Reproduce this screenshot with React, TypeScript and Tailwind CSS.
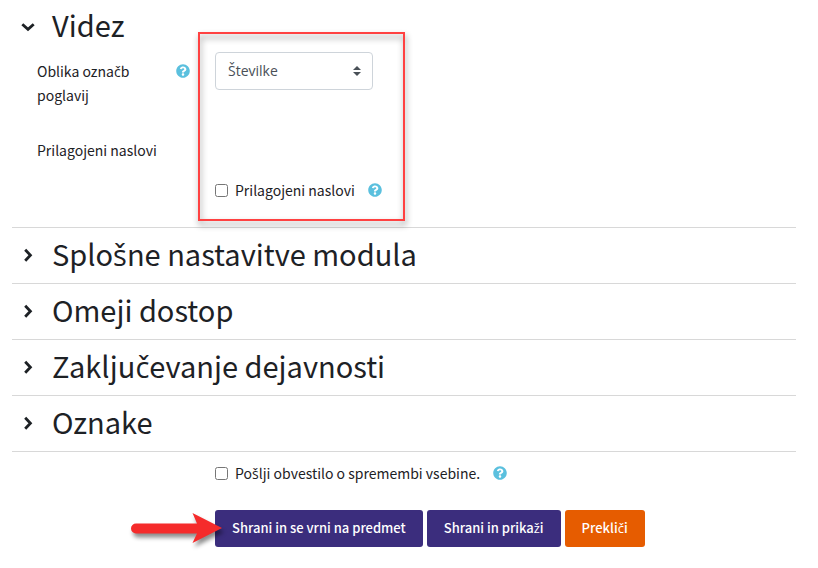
import { useId, useState } from 'react'
import type { ReactNode } from 'react'
import { FaQuestionCircle } from 'react-icons/fa'

const SECTIONS = ['Splošne nastavitve modula', 'Omeji dostop', 'Zaključevanje dejavnosti', 'Oznake']

function Text({ children }: { children: string }) {
  return (
    <>
      {children.split(/([čšžČŠŽ])/).map((part, i) =>
        i % 2 ? (
          <span key={i} className="leading-none font-['Open_Sans','Noto_Sans',sans-serif]">
            {part}
          </span>
        ) : (
          part
        ),
      )}
    </>
  )
}

function Chevron({ open }: { open: boolean }) {
  return (
    <svg viewBox="0 0 16 16" className="size-4 shrink-0" fill="none" stroke="#1d2125" strokeWidth="2.8" aria-hidden="true">
      <path d={open ? 'M2.3 5.2 8 10.4l5.7-5.2' : 'M5.2 1.7 10.4 7.2l-5.2 5.5'} />
    </svg>
  )
}

function Help() {
  return (
    <button type="button" aria-label="Pomoč" className="text-[#5bc0de] shrink-0">
      <FaQuestionCircle size={14} />
    </button>
  )
}

function SectionHeading({ title, open, onToggle }: { title: string; open: boolean; onToggle: () => void }) {
  return (
    <h3 className="text-[29px] leading-10">
      <button type="button" aria-expanded={open} onClick={onToggle} className="flex items-center gap-4 text-left">
        <Chevron open={open} />
        <span className="pb-1.5">
          <Text>{title}</Text>
        </span>
      </button>
    </h3>
  )
}

function CheckboxField({ children }: { children: ReactNode }) {
  const id = useId()
  return (
    <div className="flex items-center leading-6">
      <input id={id} type="checkbox" className="size-[13px] mr-[7px] shrink-0" />
      <label htmlFor={id} className="mr-[13px]">
        {children}
      </label>
      <Help />
    </div>
  )
}

function Arrow() {
  return (
    <svg
      viewBox="0 0 92 32"
      className="absolute top-0.5 -left-[84px] w-[92px] h-8 overflow-visible pointer-events-none drop-shadow-[2px_4px_2px_rgba(0,0,0,0.45)]"
      aria-hidden="true"
    >
      <path
        d="M5 11.5H66L61.5 1 91 16 61.5 31 66 21.5H5A5 5 0 0 1 5 11.5Z"
        fill="#f52b2b"
      />
    </svg>
  )
}

export default function App() {
  const [open, setOpen] = useState<string[]>(['Videz'])

  const toggle = (title: string) =>
    setOpen((prev) => (prev.includes(title) ? prev.filter((t) => t !== title) : [...prev, title]))

  return (
    <form
      className="min-h-screen bg-white pl-3 pr-[22px] pt-1 pb-5 text-sm text-[#1d2125] font-['Noto_Sans_CJK_SC','Open_Sans',sans-serif]"
      onSubmit={(e) => e.preventDefault()}
    >
      <section className="pb-[25px]">
        <div className="pl-2">
          <SectionHeading title="Videz" open={open.includes('Videz')} onToggle={() => toggle('Videz')} />
        </div>
        {open.includes('Videz') && (
          <div className="flex gap-6 pl-[25px] pt-0.5">
            <div className="w-[153px] pt-[7px] leading-6">
              <div className="flex items-start justify-between">
                <label htmlFor="numbering">
                  <Text>Oblika označb</Text>
                  <br />
                  poglavij
                </label>
                <span className="flex h-6 items-center">
                  <Help />
                </span>
              </div>
              <p className="pt-[31px]">Prilagojeni naslovi</p>
            </div>
            <div className="relative pl-px">
              <div className="relative w-fit">
                <select
                  id="numbering"
                  className="appearance-none block w-[158px] h-[38px] pl-3 pr-7 rounded border border-[#ced4da] bg-white text-[#495057] font-['Open_Sans','Noto_Sans',sans-serif]"
                >
                  <option>Številke</option>
                  <option>Brez</option>
                </select>
                <svg viewBox="0 0 8 10" className="absolute right-3 top-3.5 w-2 h-2.5 pointer-events-none" fill="#495057" aria-hidden="true">
                  <path d="M4 0 0 4h8ZM4 10 0 6h8Z" />
                </svg>
              </div>
              <div className="pt-[88px]">
                <CheckboxField>Prilagojeni naslovi</CheckboxField>
              </div>
              <div className="absolute -top-5 -bottom-[19px] -left-4 w-[207px] border-2 border-[#ff4141] pointer-events-none drop-shadow-[1px_4px_3px_rgba(0,0,0,0.45)]" />
            </div>
          </div>
        )}
      </section>

      {SECTIONS.map((title) => (
        <section key={title} className="h-14 flex items-center border-t border-[#d8d8d8] pl-2">
          <SectionHeading title={title} open={open.includes(title)} onToggle={() => toggle(title)} />
        </section>
      ))}

      <div className="border-t border-[#d8d8d8] pl-[203px] pt-[9px]">
        <CheckboxField>
          <Text>Pošlji obvestilo o spremembi vsebine.</Text>
        </CheckboxField>
        <div className="relative mt-[25px] flex flex-wrap gap-1 text-[13px] leading-5 font-medium text-white">
          <button type="submit" className="h-[37px] px-[17px] pb-0.5 rounded-[3px] bg-[#3b2d7d]">
            Shrani in se vrni na predmet
          </button>
          <button type="submit" className="h-[37px] px-[17px] pb-0.5 rounded-[3px] bg-[#3b2d7d]">
            <Text>Shrani in prikaži</Text>
          </button>
          <button type="button" className="h-[37px] px-[17px] pb-0.5 rounded-[3px] bg-[#e65c00]">
            <Text>Prekliči</Text>
          </button>
          <Arrow />
        </div>
      </div>
    </form>
  )
}
